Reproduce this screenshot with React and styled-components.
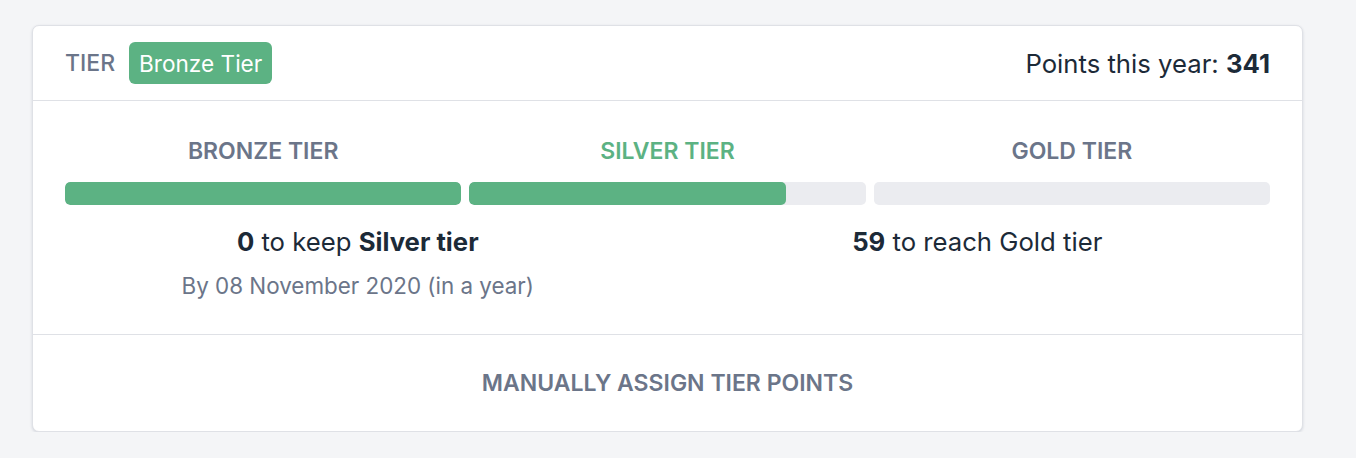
import React from "react";
import styled, { createGlobalStyle } from "styled-components";

const GlobalStyle = createGlobalStyle`
  body {
    margin: 0;
    background: #f4f5f7;
    font-family: Inter, "Noto Sans", sans-serif;
    -webkit-font-smoothing: antialiased;
  }
`;

const Page = styled.div`
  padding: 25px 0 0 32px;
`;

const Card = styled.section`
  width: 1271px;
  background: white;
  border: 1px solid #dfe1e6;
  border-radius: 7px;
  box-shadow: 0 1px 3px rgba(9, 30, 66, 0.14);
  box-sizing: border-box;
`;

const Header = styled.header`
  height: 74px;
  padding: 0 32px;
  display: flex;
  align-items: center;
  border-bottom: 1px solid #dfe1e6;
`;

const HeaderLabel = styled.span`
  font-size: 23px;
  font-weight: 500;
  color: #6b7589;
  text-transform: uppercase;
  margin-right: 14px;
`;

const Badge = styled.span`
  display: inline-flex;
  align-items: center;
  height: 42px;
  padding: 0 10px;
  border-radius: 6px;
  background: #5cb283;
  color: white;
  font-size: 22.6px;
`;

const Points = styled.div`
  margin-left: auto;
  font-size: 25.7px;
  color: #1c2a38;

  strong {
    font-weight: 700;
  }
`;

const Body = styled.div`
  padding: 36px 32px 34px;
  border-bottom: 1px solid #dfe1e6;
`;

const Tiers = styled.div`
  display: grid;
  grid-template-columns: repeat(3, 1fr);
  column-gap: 8px;
`;

const Tier = styled.div`
  display: flex;
  flex-direction: column;
  align-items: stretch;
`;

const TierName = styled.div`
  text-align: center;
  font-size: 23px;
  line-height: 28px;
  font-weight: 600;
  text-transform: uppercase;
  color: ${(p) => (p.$active ? "#5cb283" : "#6b7589")};
`;

const Track = styled.div`
  margin-top: 17px;
  height: 23px;
  border-radius: 5px;
  background: #ebecf0;
  overflow: hidden;
`;

const Fill = styled.div`
  height: 100%;
  background: #5cb283;
  border-radius: 5px;
`;

const Goals = styled.div`
  display: grid;
  grid-template-columns: 1fr 1fr;
  column-gap: 34px;
  margin-top: 22px;
`;

const Goal = styled.div`
  text-align: center;
`;

const GoalText = styled.div`
  font-size: 25.7px;
  line-height: 30px;
  color: #1c2a38;

  strong {
    font-weight: 700;
  }
`;

const GoalDate = styled.div`
  margin-top: 15px;
  font-size: 22.4px;
  line-height: 28px;
  color: #6b7589;
`;

const Footer = styled.button`
  display: block;
  width: 100%;
  border: 0;
  background: none;
  padding: 34px 0 34px;
  font-family: inherit;
  font-size: 23px;
  line-height: 28px;
  font-weight: 600;
  color: #6b7589;
  text-transform: uppercase;
  cursor: pointer;
`;

const tiers = [
  { name: "Bronze tier", progress: 100 },
  { name: "Silver tier", progress: 80, active: true },
  { name: "Gold tier", progress: 0 },
];

export default function App() {
  return (
    <>
      <GlobalStyle />
      <Page>
        <Card>
          <Header>
            <HeaderLabel>Tier</HeaderLabel>
            <Badge>Bronze Tier</Badge>
            <Points>
              Points this year: <strong>341</strong>
            </Points>
          </Header>
          <Body>
            <Tiers>
              {tiers.map((t) => (
                <Tier key={t.name}>
                  <TierName $active={t.active}>{t.name}</TierName>
                  <Track>
                    <Fill style={{ width: `${t.progress}%` }} />
                  </Track>
                </Tier>
              ))}
            </Tiers>
            <Goals>
              <Goal>
                <GoalText>
                  <strong>0</strong> to keep <strong>Silver tier</strong>
                </GoalText>
                <GoalDate>By 08 November 2020 (in a year)</GoalDate>
              </Goal>
              <Goal>
                <GoalText>
                  <strong>59</strong> to reach Gold tier
                </GoalText>
              </Goal>
            </Goals>
          </Body>
          <Footer>Manually assign tier points</Footer>
        </Card>
      </Page>
    </>
  );
}
